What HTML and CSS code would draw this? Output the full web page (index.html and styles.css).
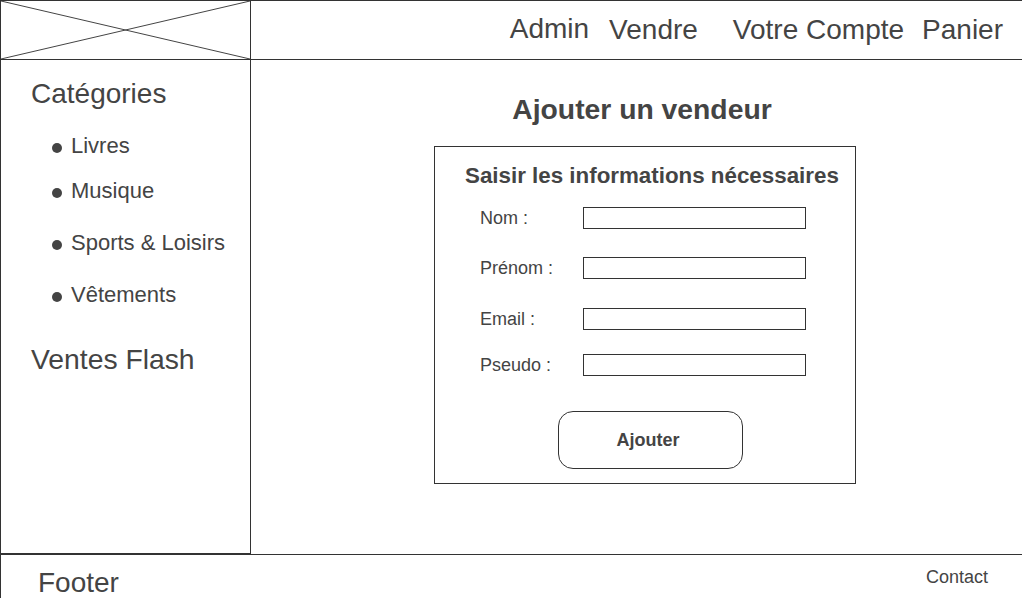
FILE: index.html
```html
<!DOCTYPE html>
<html lang="fr">
<head>
<meta charset="utf-8">
<title>Ajouter un vendeur</title>
<link rel="stylesheet" href="styles.css">
</head>
<body>
<div class="page">
  <header class="header">
    <div class="logo">
      <svg class="logo-x" width="249" height="58" viewBox="0 0 249 58" preserveAspectRatio="none">
        <line x1="0" y1="0" x2="249" y2="58" stroke="#444" stroke-width="1"/>
        <line x1="0" y1="58" x2="249" y2="0" stroke="#444" stroke-width="1"/>
      </svg>
    </div>
    <nav class="nav">
      <a class="nav-item nav-admin">Admin</a>
      <a class="nav-item nav-vendre">Vendre</a>
      <a class="nav-item nav-compte">Votre Compte</a>
      <a class="nav-item nav-panier">Panier</a>
    </nav>
  </header>
  <div class="main">
    <aside class="sidebar">
      <h2 class="side-title">Catégories</h2>
      <ul class="cat-list">
        <li class="cat cat-livres">Livres</li>
        <li class="cat cat-musique">Musique</li>
        <li class="cat cat-sports">Sports &amp; Loisirs</li>
        <li class="cat cat-vetements">Vêtements</li>
      </ul>
      <h2 class="side-title side-flash">Ventes Flash</h2>
    </aside>
    <section class="content">
      <div class="content-inner">
        <h1 class="page-title">Ajouter un vendeur</h1>
        <form class="form-box">
          <h3 class="form-title">Saisir les informations nécessaires</h3>
          <div class="row row-nom"><label class="lbl">Nom :</label><input class="inp" type="text"></div>
          <div class="row row-prenom"><label class="lbl">Prénom :</label><input class="inp" type="text"></div>
          <div class="row row-email"><label class="lbl">Email :</label><input class="inp" type="text"></div>
          <div class="row row-pseudo"><label class="lbl">Pseudo :</label><input class="inp" type="text"></div>
          <button class="btn" type="button">Ajouter</button>
        </form>
      </div>
    </section>
  </div>
  <footer class="footer">
    <span class="footer-title">Footer</span>
    <span class="footer-link">Contact</span>
  </footer>
</div>
</body>
</html>
```
FILE: styles.css
```css
* { box-sizing: border-box; }
html, body {
  margin: 0;
  padding: 0;
  background: #fff;
  overflow: hidden;
}
body {
  font-family: "Liberation Sans", Arial, sans-serif;
  color: #444;
}
.page {
  width: 1022px;
  height: 598px;
  display: flex;
  flex-direction: column;
}
.header {
  height: 60px;
  flex: none;
  display: flex;
  border-top: 1px solid #333;
  border-bottom: 1px solid #333;
}
.logo {
  width: 251px;
  flex: none;
  border-left: 1px solid #333;
  border-right: 1px solid #333;
  display: flex;
}
.logo-x { display: block; }
.nav {
  flex: 1;
  display: flex;
  align-items: center;
  justify-content: flex-end;
  padding-right: 19px;
}
.nav-item {
  font-size: 28px;
  line-height: 32px;
  color: #444;
  text-decoration: none;
}
.nav-admin { margin-bottom: 2px; }
.nav-vendre { margin-left: 20px; }
.nav-compte { margin-left: 35px; }
.nav-panier { margin-left: 18px; }

.main {
  height: 494px;
  flex: none;
  display: flex;
}
.sidebar {
  width: 251px;
  flex: none;
  border-left: 1px solid #333;
  border-right: 1px solid #333;
  border-bottom: 1px solid #333;
  padding: 18px 0 0 30px;
}
.side-title {
  margin: 0;
  font-size: 28px;
  line-height: 32px;
  font-weight: normal;
}
.side-flash { margin-top: 35px; font-size: 28.3px; }
.cat-list {
  list-style: none;
  margin: 23px 0 0 0;
  padding: 0;
}
.cat {
  font-size: 22px;
  line-height: 26px;
  padding-left: 40px;
  display: flex;
  align-items: center;
}
.cat::before {
  content: "";
  width: 10px;
  height: 10px;
  border-radius: 50%;
  background: #444;
  margin-left: -19px;
  margin-right: 9px;
  margin-top: 3px;
}
.cat-musique { margin-top: 19px; }
.cat-sports { margin-top: 26px; }
.cat-vetements { margin-top: 26px; }

.content {
  flex: 1;
  padding: 33px 0 0 183px;
}
.content-inner {
  width: 422px;
}
.page-title {
  margin: 0;
  font-size: 28.3px;
  line-height: 32px;
  font-weight: bold;
  text-align: center;
  padding-right: 6px;
}
.form-box {
  margin: 21px 0 0 0;
  border: 1px solid #333;
  padding: 16px 0 14px 0;
  display: flex;
  flex-direction: column;
}
.form-title {
  margin: 0 0 18px 30px;
  font-size: 22.35px;
  line-height: 26px;
  font-weight: bold;
  white-space: nowrap;
}
.row {
  display: flex;
  align-items: center;
  padding-left: 45px;
  height: 22px;
}
.row-prenom { margin-top: 28px; }
.row-email { margin-top: 29px; }
.row-pseudo { margin-top: 24px; }
.lbl {
  width: 103px;
  font-size: 18px;
  line-height: 21px;
}
.inp {
  width: 223px;
  height: 22px;
  margin: 0;
  padding: 0;
  border: 1px solid #333;
  background: #fff;
  outline: none;
}
.btn {
  margin: 35px 0 0 123px;
  width: 185px;
  height: 58px;
  border: 1px solid #333;
  border-radius: 15px;
  background: #fff;
  font-family: "Liberation Sans", Arial, sans-serif;
  font-size: 18px;
  font-weight: bold;
  color: #444;
  padding: 0 5px 0 0;
}

.footer {
  flex: none;
  height: 44px;
  overflow: hidden;
  border-top: 1px solid #333;
  border-left: 1px solid #333;
  display: flex;
  align-items: flex-start;
  justify-content: space-between;
  padding: 12px 34px 0 37px;
}
.footer-title {
  font-size: 28px;
  line-height: 32px;
}
.footer-link {
  font-size: 18px;
  line-height: 21px;
}
```
